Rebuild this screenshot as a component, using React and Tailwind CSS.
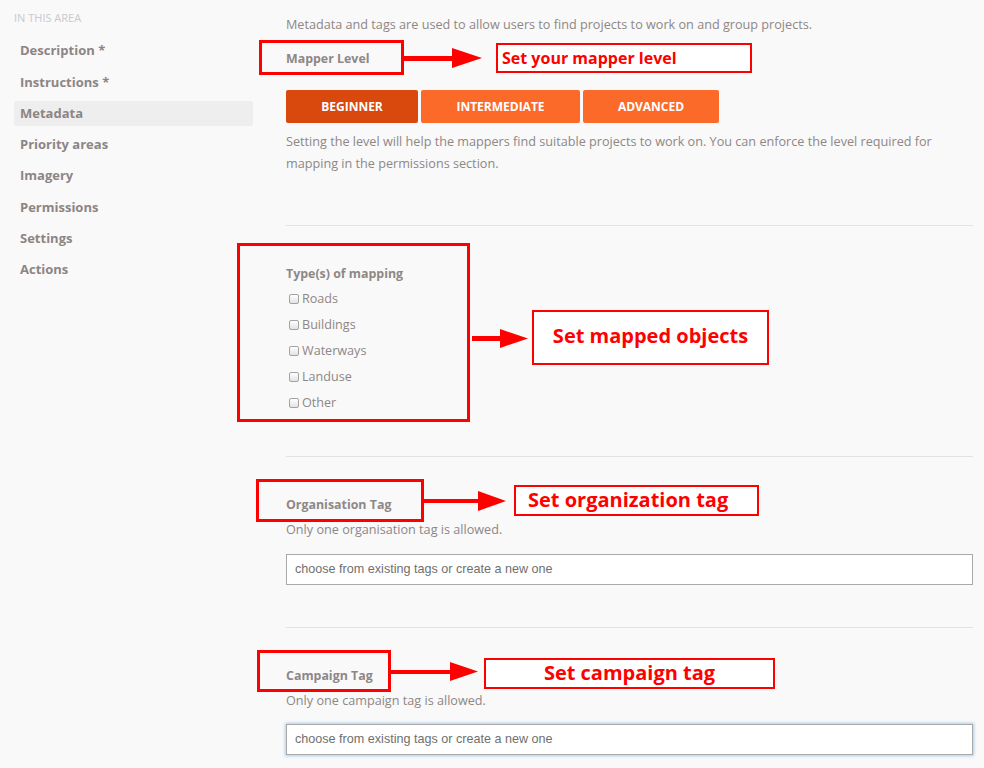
import React from "react";

const navItems = [
  "Description *",
  "Instructions *",
  "Metadata",
  "Priority areas",
  "Imagery",
  "Permissions",
  "Settings",
  "Actions",
];

function Checkbox({ label }) {
  return (
    <div className="flex items-center h-[26px]">
      <span className="ml-[3px] w-[10px] h-[10px] rounded-[2px] border border-[#a3a3a3] bg-gradient-to-b from-white to-[#e2e2e2]" />
      <span className="ml-[3px] text-[12.6px] text-[#8e8786]">{label}</span>
    </div>
  );
}

function Arrow({ left, top, shaft, head, headH, thick = 5 }) {
  return (
    <div
      className="absolute flex items-center"
      style={{ left, top, height: headH }}
    >
      <div className="bg-[#ff0000]" style={{ width: shaft, height: thick }} />
      <svg width={head} height={headH} viewBox={`0 0 ${head} ${headH}`}>
        <polygon points={`0,0 ${head},${headH / 2} 0,${headH}`} fill="#ff0000" />
      </svg>
    </div>
  );
}

export default function App() {
  return (
    <div
      className="relative w-[984px] h-[768px] overflow-hidden bg-[#f9f9f9] flex"
      style={{ fontFamily: '"Open Sans", "Noto Sans", sans-serif' }}
    >
      {/* Sidebar */}
      <aside className="w-[286px] shrink-0 pl-[14px] pt-[10px]">
        <div className="text-[11px] leading-[16px] uppercase text-[#c9c9c9]">In this area</div>
        <nav className="mt-[12.5px] w-[239px] flex flex-col gap-[6.28px]">
          {navItems.map((n) => (
            <div
              key={n}
              className={`h-[25px] flex items-center pl-[6px] rounded-[3px] text-[13px] font-bold text-[#8c8584] ${
                n === "Metadata" ? "bg-[#eeeeee]" : ""
              }`}
            >
              {n}
            </div>
          ))}
        </nav>
      </aside>

      {/* Main */}
      <main className="w-[687px] shrink-0 pt-[13px] text-[#8e8786]">
        <p className="text-[12.65px] leading-[22px]">
          Metadata and tags are used to allow users to find projects to work on and group projects.
        </p>
        <div className="mt-[13px] text-[12.4px] leading-[22px] font-bold">Mapper Level</div>
        <div className="mt-[20px] flex gap-[3px]">
          <button className="h-[33px] w-[132px] rounded-[2px] bg-[#d9480c] text-white text-[12px] font-bold uppercase">
            Beginner
          </button>
          <button className="h-[33px] w-[159px] rounded-[2px] bg-[#fb6a29] text-white text-[12px] font-bold uppercase">
            Intermediate
          </button>
          <button className="h-[33px] w-[136px] rounded-[2px] bg-[#fb6a29] text-white text-[12px] font-bold uppercase">
            Advanced
          </button>
        </div>
        <p className="mt-[7px] text-[12.65px] leading-[22px]">
          Setting the level will help the mappers find suitable projects to work on. You can enforce the level required for
          <br />
          mapping in the permissions section.
        </p>

        <div className="mt-[51px] h-px bg-[#e2e2e2]" />

        <div className="mt-[37px] text-[12.4px] leading-[22px] font-bold">Type(s) of mapping</div>
        <div className="mt-[1px] flex flex-col">
          {["Roads", "Buildings", "Waterways", "Landuse", "Other"].map((l) => (
            <Checkbox key={l} label={l} />
          ))}
        </div>

        <div className="mt-[40px] h-px bg-[#e2e2e2]" />

        <div className="mt-[37px] text-[12.4px] leading-[22px] font-bold">Organisation Tag</div>
        <p className="mt-[2px] text-[12.65px] leading-[22px]">Only one organisation tag is allowed.</p>
        <div className="mt-[14px] h-[31px] flex items-center border border-[#a9a9a9] bg-white pl-[8px]">
          <span
            className="text-[12.6px] text-[#6f6f6f]"
            style={{ fontFamily: '"Liberation Sans", Arial, sans-serif' }}
          >
            choose from existing tags or create a new one
          </span>
        </div>

        <div className="mt-[42px] h-px bg-[#e2e2e2]" />

        <div className="mt-[37px] text-[12.4px] leading-[22px] font-bold">Campaign Tag</div>
        <p className="mt-[2px] text-[12.65px] leading-[22px]">Only one campaign tag is allowed.</p>
        <div className="mt-[13px] h-[31px] flex items-center border border-[#a9a9a9] bg-white pl-[8px] shadow-[0_0_3px_1px_#a9cdee]">
          <span
            className="text-[12.6px] text-[#6f6f6f]"
            style={{ fontFamily: '"Liberation Sans", Arial, sans-serif' }}
          >
            choose from existing tags or create a new one
          </span>
        </div>
      </main>

      {/* Annotations */}
      <div className="absolute left-[259px] top-[40px] w-[145px] h-[35px] border-[3px] border-[#ff0000]" />
      <Arrow left={404} top={48} shaft={48} head={30} headH={20} />
      <div className="absolute left-[496px] top-[43px] w-[256px] h-[30px] border-2 border-[#ff0000] bg-white flex items-center pl-[4px]">
        <span className="text-[16px] font-bold text-[#ff0000] leading-none">
          Set your mapper level
        </span>
      </div>

      <div className="absolute left-[237px] top-[243px] w-[233px] h-[179px] border-[3px] border-[#ff0000]" />
      <Arrow left={472} top={329} shaft={28} head={28} headH={19} thick={5} />
      <div className="absolute left-[532px] top-[310px] w-[237px] h-[55px] border-2 border-[#ff0000] bg-white flex items-center justify-center pb-[4px]">
        <span className="text-[20px] font-bold text-[#ff0000]">Set mapped objects</span>
      </div>

      <div className="absolute left-[256px] top-[479px] w-[168px] h-[43px] border-[3px] border-[#ff0000]" />
      <Arrow left={424} top={491} shaft={54} head={28} headH={20} thick={4} />
      <div className="absolute left-[514px] top-[485px] w-[245px] h-[31px] border-2 border-[#ff0000] bg-white flex items-center pl-[12px] pb-[2px]">
        <span className="text-[20px] font-bold text-[#ff0000]">Set organization tag</span>
      </div>

      <div className="absolute left-[257px] top-[650px] w-[134px] h-[42px] border-[3px] border-[#ff0000]" />
      <Arrow left={391} top={662} shaft={59} head={28} headH={19} thick={4} />
      <div className="absolute left-[484px] top-[658px] w-[291px] h-[31px] border-2 border-[#ff0000] bg-white flex items-center justify-center pb-[2px]">
        <span className="text-[20px] font-bold text-[#ff0000]">Set campaign tag</span>
      </div>
    </div>
  );
}
